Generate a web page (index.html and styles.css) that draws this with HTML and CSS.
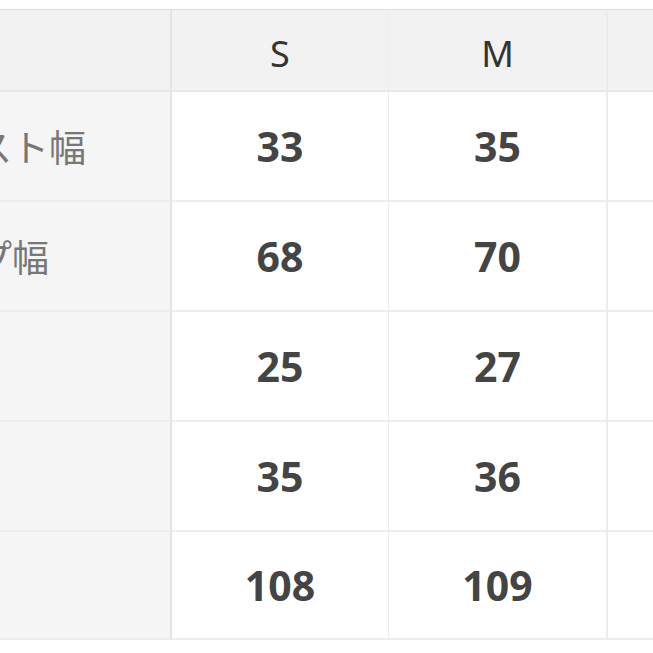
FILE: index.html
```html
<!DOCTYPE html>
<html lang="ja">
<head>
<meta charset="utf-8">
<title>サイズ表</title>
<link rel="stylesheet" href="styles.css">
</head>
<body>
<div class="size-table">
  <div class="cell head label"></div>
  <div class="cell head">S</div>
  <div class="cell head">M</div>
  <div class="cell head last"></div>

  <div class="cell label">ウエスト幅</div>
  <div class="cell num">33</div>
  <div class="cell num">35</div>
  <div class="cell num last"></div>

  <div class="cell label">ヒップ幅</div>
  <div class="cell num">68</div>
  <div class="cell num">70</div>
  <div class="cell num last"></div>

  <div class="cell label"></div>
  <div class="cell num">25</div>
  <div class="cell num">27</div>
  <div class="cell num last"></div>

  <div class="cell label"></div>
  <div class="cell num">35</div>
  <div class="cell num">36</div>
  <div class="cell num last"></div>

  <div class="cell label"></div>
  <div class="cell num">108</div>
  <div class="cell num">109</div>
  <div class="cell num last"></div>
</div>
</body>
</html>
```

FILE: styles.css
```css
html, body {
  margin: 0;
  padding: 0;
  overflow: hidden;
  background: #ffffff;
}

body {
  font-family: "Noto Sans", "Noto Sans CJK JP", sans-serif;
}

.size-table {
  display: grid;
  grid-template-columns: 292px 217px 218px 218px;
  grid-template-rows: 82px 110px 110px 110px 110px 108px;
  width: 945px;
  margin-top: 9px;
  margin-left: -120px;
  border-top: 1px solid #dedede;
}

.cell {
  box-sizing: border-box;
  display: flex;
  align-items: center;
  justify-content: center;
  background: #ffffff;
  border-bottom: 2px solid #ededed;
  border-right: 1px solid #ececec;
}

.cell.head {
  background: #f2f2f2;
  color: #333333;
  font-size: 36px;
  font-weight: 400;
  border-bottom: 2px solid #e8e8e8;
  padding-top: 7px;
}

.cell.label {
  justify-content: flex-start;
  padding-left: 21px;
  background: #f5f5f5;
  color: #777777;
  font-family: "Noto Sans CJK JP", "Noto Sans", sans-serif;
  font-size: 37px;
  border-right: 2px solid #e4e4e4;
}

.cell.head.label {
  background: #f2f2f2;
}

.cell.num {
  color: #444444;
  font-size: 41px;
  font-weight: 700;
}

.cell.last {
  border-left: 1px solid #ececec;
}
```
